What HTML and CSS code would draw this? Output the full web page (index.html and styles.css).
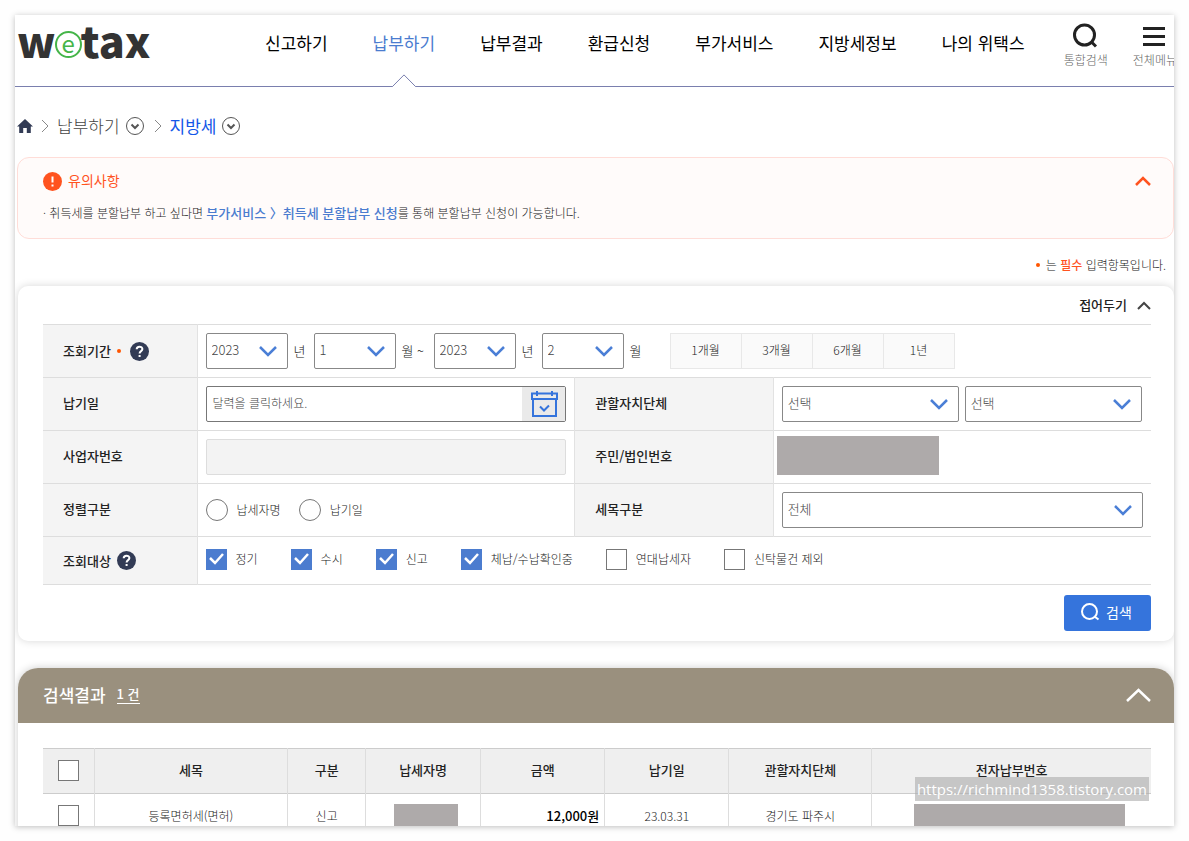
FILE: index.html
```html
<!DOCTYPE html>
<html lang="ko">
<head>
<meta charset="utf-8">
<meta name="viewport" content="width=device-width, initial-scale=1">
<title>위택스 - 지방세 납부하기</title>
<link rel="stylesheet" href="styles.css">
</head>
<body>
<div class="frame">
  <header class="header">
    <a class="logo" href="#" aria-label="wetax"><span>w</span><span class="logo-e">e</span><span>tax</span></a>
    <nav class="nav">
      <a href="#">신고하기</a>
      <a href="#" class="active">납부하기<svg class="nav-caret" width="24" height="13" viewBox="0 0 24 13"><path d="M0 13 12 1 24 13Z" fill="#fff"/><path d="M0 12.5H.5L12 .9 23.5 12.5H24" fill="none" stroke="#7a7fae"/></svg></a>
      <a href="#">납부결과</a>
      <a href="#">환급신청</a>
      <a href="#">부가서비스</a>
      <a href="#">지방세정보</a>
      <a href="#">나의 위택스</a>
    </nav>
    <div class="tools">
      <button type="button" class="tool">
        <svg width="26" height="26" viewBox="0 0 26 26" fill="none" stroke="#222" stroke-width="3"><circle cx="11.500" cy="12" r="10"/><path d="M18 18.500 23 23.500"/></svg>
        <span>통합검색</span>
      </button>
      <button type="button" class="tool">
        <svg width="26" height="26" viewBox="0 0 26 26" stroke="#222" stroke-width="3"><path d="M1 5.500H23M1 13.500H23M1 21.500H23"/></svg>
        <span>전체메뉴</span>
      </button>
    </div>
  </header>

  <nav class="crumbs" aria-label="현재 위치">
    <a href="#" aria-label="홈"><svg width="16" height="14" viewBox="0 0 16 14"><path d="M8 0 16 7.400H13.800V14H9.800V9H6.200V14H2.200V7.400H0Z" fill="#323b55"/></svg></a>
    <svg width="8" height="14" viewBox="0 0 8 14" fill="none" stroke="#888"><path d="M1 1 7 7 1 13"/></svg>
    <a href="#">납부하기</a>
    <button type="button" class="round" aria-label="납부하기 메뉴"><svg width="18" height="18" viewBox="0 0 18 18" fill="none" stroke="#555"><circle cx="9" cy="9" r="8.500"/><path d="M5.500 7.500 9 11 12.500 7.500" stroke-width="2"/></svg></button>
    <svg width="8" height="14" viewBox="0 0 8 14" fill="none" stroke="#888"><path d="M1 1 7 7 1 13"/></svg>
    <a href="#" class="current">지방세</a>
    <button type="button" class="round" aria-label="지방세 메뉴"><svg width="18" height="18" viewBox="0 0 18 18" fill="none" stroke="#555"><circle cx="9" cy="9" r="8.500"/><path d="M5.500 7.500 9 11 12.500 7.500" stroke-width="2"/></svg></button>
  </nav>

  <section class="notice">
    <div class="notice-head">
      <svg width="19" height="19" viewBox="0 0 19 19"><circle cx="9.500" cy="9.500" r="9.500" fill="#ff531f"/><path d="M9.500 4.500V10.500M9.500 12.500V14.500" stroke="#fff" stroke-width="2"/></svg>
      <h2>유의사항</h2>
      <button type="button" aria-label="유의사항 접기"><svg width="16" height="10" viewBox="0 0 16 10" fill="none" stroke="#ff531f" stroke-width="2.500"><path d="M1 9 8 2 15 9"/></svg></button>
    </div>
    <p>· 취득세를 분할납부 하고 싶다면 <a href="#">부가서비스 〉취득세 분할납부 신청</a>를 통해 분할납부 신청이 가능합니다.</p>
  </section>

  <p class="required"><i class="dot"></i><span>는 <b>필수</b> 입력항목입니다.</span></p>

  <form class="card">
    <div class="fold">
      <button type="button">접어두기 <svg width="14" height="9" viewBox="0 0 14 9" fill="none" stroke="#444" stroke-width="2"><path d="M1 8 7 2 13 8"/></svg></button>
    </div>
    <table class="form">
      <colgroup><col class="c1"><col class="c2"><col class="c3"><col class="c4"></colgroup>
      <tbody>
      <tr>
        <th scope="row"><div class="label">조회기간<i class="dot"></i><svg class="help wide" width="19" height="19" viewBox="0 0 19 19"><circle cx="9.500" cy="9.500" r="9.500" fill="#323b55"/><path d="M6.700 7.300C6.700 3.800 12.400 3.800 12.400 7.100C12.400 9.200 9.600 9 9.600 11.500M9.600 13V15" fill="none" stroke="#fff" stroke-width="2"/></svg></div></th>
        <td colspan="3">
          <div class="line">
            <select class="short" aria-label="시작 연도"><option>2023</option></select><span class="unit">년</span>
            <select class="short" aria-label="시작 월"><option>1</option></select><span class="unit long">월 ~</span>
            <select class="short" aria-label="종료 연도"><option>2023</option></select><span class="unit">년</span>
            <select class="short" aria-label="종료 월"><option>2</option></select><span class="unit">월</span>
            <div class="segments"><button type="button">1개월</button><button type="button">3개월</button><button type="button">6개월</button><button type="button">1년</button></div>
          </div>
        </td>
      </tr>
      <tr>
        <th scope="row"><label class="label" for="due">납기일</label></th>
        <td>
          <div class="date"><input id="due" type="text" placeholder="달력을 클릭하세요."><button type="button" aria-label="달력"><svg width="28" height="28" viewBox="0 0 28 28" fill="none" stroke="#3574dc" stroke-width="2"><path d="M3 9V26H26V9M2 3.500H27V9H2ZM7 1V6M22 1V6"/><path d="M10 16.500 14 20.500 19 15.500"/></svg></button></div>
        </td>
        <th scope="row"><span class="label">관할자치단체</span></th>
        <td><div class="pair"><select aria-label="관할 시도"><option>선택</option></select><select aria-label="관할 시군구"><option>선택</option></select></div></td>
      </tr>
      <tr>
        <th scope="row"><label class="label" for="biz">사업자번호</label></th>
        <td><input id="biz" class="text" type="text" disabled></td>
        <th scope="row"><span class="label">주민/법인번호</span></th>
        <td class="masked"><span class="mask id"></span></td>
      </tr>
      <tr>
        <th scope="row"><span class="label">정렬구분</span></th>
        <td>
          <div class="radios">
            <label><input type="radio" name="sort">납세자명</label>
            <label><input type="radio" name="sort">납기일</label>
          </div>
        </td>
        <th scope="row"><label class="label" for="kind">세목구분</label></th>
        <td><select id="kind" class="full"><option>전체</option></select></td>
      </tr>
      <tr class="targets">
        <th scope="row"><div class="label">조회대상<svg class="help" width="19" height="19" viewBox="0 0 19 19"><circle cx="9.500" cy="9.500" r="9.500" fill="#323b55"/><path d="M6.700 7.300C6.700 3.800 12.400 3.800 12.400 7.100C12.400 9.200 9.600 9 9.600 11.500M9.600 13V15" fill="none" stroke="#fff" stroke-width="2"/></svg></div></th>
        <td colspan="3">
          <div class="checks">
            <label><input type="checkbox" checked>정기</label>
            <label><input type="checkbox" checked>수시</label>
            <label><input type="checkbox" checked>신고</label>
            <label><input type="checkbox" checked>체납/수납확인중</label>
            <label><input type="checkbox">연대납세자</label>
            <label><input type="checkbox">신탁물건 제외</label>
          </div>
        </td>
      </tr>
      </tbody>
    </table>
    <div class="actions">
      <button type="submit" class="search"><svg width="19" height="18" viewBox="0 0 19 18" fill="none" stroke="#fff" stroke-width="2"><circle cx="8.500" cy="8.500" r="7.500"/><path d="M13.500 13.500 17.500 16.500"/></svg>검색</button>
    </div>
  </form>

  <section class="results">
    <div class="results-head">
      <h2>검색결과</h2><span class="count">1 건</span>
      <button type="button" aria-label="검색결과 접기"><svg width="25" height="14" viewBox="0 0 25 14" fill="none" stroke="#fff" stroke-width="2.500"><path d="M1 13 12.500 2 24 13"/></svg></button>
    </div>
    <div class="results-body">
      <table class="list">
        <colgroup><col class="l1"><col class="l2"><col class="l3"><col class="l4"><col class="l5"><col class="l5"><col class="l7"><col class="l8"></colgroup>
        <thead>
          <tr><th><input type="checkbox" aria-label="전체 선택"></th><th scope="col">세목</th><th scope="col">구분</th><th scope="col">납세자명</th><th scope="col">금액</th><th scope="col">납기일</th><th scope="col">관할자치단체</th><th scope="col">전자납부번호</th></tr>
        </thead>
        <tbody>
          <tr><td><input type="checkbox" aria-label="등록면허세 선택"></td><td>등록면허세(면허)</td><td>신고</td><td><span class="mask name"></span></td><td class="amount">12,000원</td><td>23.03.31</td><td>경기도 파주시</td><td><span class="mask number"></span></td></tr>
        </tbody>
      </table>
    </div>
  </section>
  <span class="watermark">https://richmind1358.tistory.com</span>
</div>
</body>
</html>
```
FILE: styles.css
```css
* { box-sizing: border-box; }
body {
  margin: 0;
  padding: 15px;
  height: 100vh;
  background: #fefefe;
  font-family: "Noto Sans CJK KR", "Noto Sans", sans-serif;
  font-size: 13px;
  line-height: 20px;
  font-weight: 300;
  color: #222;
}
a { color: inherit; text-decoration: none; }
h2, p { margin: 0; }
svg { display: block; flex: none; }
button, input, select { font: inherit; color: inherit; margin: 0; }
button { padding: 0; border: 0; background: none; cursor: pointer; }

.frame {
  position: relative;
  height: 100%;
  overflow: hidden;
  background: #fff;
  box-shadow: 0 1px 6px rgba(0, 0, 0, .25);
}

.header {
  display: flex;
  height: 72px;
  padding-left: 2px;
  border-bottom: 1px solid #7a7fae;
}
.logo {
  display: flex;
  align-items: flex-start;
  width: 132px;
  height: 60px;
  font-size: 43px;
  line-height: 48px;
  font-weight: 900;
  color: #333;
}
.logo-e {
  flex: none;
  width: 27px;
  height: 27px;
  margin: 16px -1px 0;
  border: 2px solid #45b549;
  border-radius: 50%;
  color: #45b549;
  font-size: 24px;
  line-height: 19px;
  font-weight: 400;
  text-align: center;
}
.nav {
  display: flex;
  gap: 45px;
  margin-left: 116px;
  font-size: 17px;
  line-height: 56px;
  font-weight: 400;
  color: #000;
  white-space: nowrap;
}
.nav a { position: relative; height: 72px; }
.nav .active { color: #4b7ccf; }
.nav-caret { position: absolute; left: 50%; bottom: 0; margin-left: -12px; }
.tools {
  display: flex;
  gap: 25px;
  margin: 8px -3px 0 auto;
  font-size: 12px;
  color: #666;
  white-space: nowrap;
}
.tool { display: flex; flex-direction: column; align-items: center; gap: 1px; height: 48px; }

.crumbs {
  display: flex;
  align-items: center;
  gap: 8px;
  height: 24px;
  margin: 27px 0 19px 2px;
  font-size: 17px;
  line-height: 24px;
  color: #444;
}
.crumbs .current { color: #1457e8; font-weight: 400; }
.round { margin: 0 2px 0 -2px; }

.notice {
  height: 82px;
  margin-left: 2px;
  padding: 12px 22px 0 25px;
  border: 1px solid #ffddd8;
  border-radius: 12px;
  background: #fffbfa;
}
.notice-head { display: flex; align-items: center; gap: 6px; height: 22px; color: #ff531f; }
.notice-head h2 { font-size: 14px; line-height: 18px; padding-bottom: 2px; font-weight: 400; }
.notice-head button { margin-left: auto; }
.notice p { margin-top: 11px; font-size: 12px; }
.notice p a { color: #4b7ccf; font-size: 13px; font-weight: 500; }

.required {
  display: flex;
  align-items: center;
  justify-content: flex-end;
  gap: 6px;
  margin: 16px 8px 11px;
  font-size: 12px;
}
.required b { color: #ff531f; font-weight: 500; }
.dot { width: 4px; height: 4px; border-radius: 50%; background: #ff5500; }

.card {
  margin-left: 3px;
  padding: 0 23px 10px 25px;
  border-radius: 10px;
  background: #fff;
  box-shadow: 0 0 8px rgba(0, 0, 0, .16);
}
.fold { display: flex; justify-content: flex-end; height: 38px; }
.fold button { display: flex; align-items: center; gap: 10px; font-weight: 500; }

.form, .list { width: 100%; border-collapse: collapse; table-layout: fixed; }
.c1 { width: 13.9%; }
.c2 { width: 34.1%; }
.c3 { width: 17.9%; }
.c4 { width: 34.1%; }
.form tr { height: 53px; border-top: 1px solid #ddd; }
.form .targets { height: 48px; border-bottom: 1px solid #ddd; }
.form th {
  padding: 0 20px 2px;
  border-right: 1px solid #e2e2e2;
  background: #f4f4f4;
  font-weight: 500;
  text-align: left;
  color: #222;
}
.form td + th { border-left: 1px solid #e2e2e2; }
.form td { padding: 0 8px; }
.form .masked { padding: 5px 3px 0; vertical-align: top; }
.form .targets td { padding-bottom: 3px; }
.form .targets th, .form tr:first-child th { padding-bottom: 0; }
.label { display: flex; align-items: center; gap: 6px; }
.help.wide { margin-left: 3px; }
.line, .pair, .radios, .checks { display: flex; align-items: center; }
select {
  height: 36px;
  padding: 0 34px 2px 5px;
  border: 1px solid #888;
  border-radius: 2px;
  appearance: none;
  background: #fff url("data:image/svg+xml,%3Csvg xmlns='http://www.w3.org/2000/svg' width='18' height='11' fill='none' stroke='%234b7fd6' stroke-width='2.500'%3E%3Cpath d='M1 1 9 9 17 1'/%3E%3C/svg%3E") no-repeat right 10px center;
  color: #444;
}
.short { width: 82px; padding-right: 26px; }
.unit { width: 26px; padding-left: 6px; }
.unit.long { width: 38px; }
.segments { display: flex; margin-left: 20px; border: 1px solid #e8e8e8; }
.segments button { width: 70px; height: 34px; padding-bottom: 2px; background: #fafafa; font-size: 12px; }
.segments button + button { width: 71px; border-left: 1px solid #e8e8e8; }
.pair { gap: 6px; }
.pair select { flex: 1; max-width: 177px; }
.full { width: 100%; }
.date { display: flex; height: 36px; border: 1px solid #777; border-radius: 2px; }
.date input { flex: 1; min-width: 0; padding: 0 6px 2px; border: 0; background: none; font-size: 12px; }
.date input::placeholder { color: #444; }
.date button { display: grid; place-items: center; width: 43px; background: #eaeaea; }
.text { display: block; width: 100%; height: 36px; border: 1px solid #ddd; border-radius: 2px; background: #f3f3f3; }
.mask { display: block; background: #aeaaaa; }
.id { width: 162px; height: 39px; }
.radios { gap: 18px; font-size: 12px; }
.checks { gap: 33px; font-size: 12px; }
.radios label, .checks label { display: flex; align-items: center; gap: 9px; }
input[type="radio"] {
  width: 22px;
  height: 22px;
  border: 1px solid #777;
  border-radius: 50%;
  appearance: none;
  background: #fff;
}
input[type="checkbox"] {
  display: block;
  width: 21px;
  height: 21px;
  border: 1px solid #777;
  appearance: none;
  background: #fff;
}
input[type="checkbox"]:checked {
  border-color: #4b7ccf;
  background: #4b7ccf url("data:image/svg+xml,%3Csvg xmlns='http://www.w3.org/2000/svg' width='15' height='12' fill='none' stroke='white' stroke-width='2.500'%3E%3Cpath d='M1 5 6 10 14 1'/%3E%3C/svg%3E") no-repeat center;
}
.actions { display: flex; justify-content: flex-end; padding-top: 10px; }
.search {
  display: flex;
  align-items: center;
  justify-content: center;
  gap: 6px;
  width: 87px;
  height: 36px;
  padding: 0 2px 2px 0;
  border-radius: 3px;
  background: #3574dc;
  color: #fff;
  font-size: 14px;
  font-weight: 400;
}

.results {
  margin: 27px 0 0 3px;
  border-radius: 20px 20px 0 0;
  box-shadow: 0 0 8px rgba(0, 0, 0, .2);
}
.results-head {
  display: flex;
  align-items: center;
  height: 55px;
  padding: 0 23px 2px 25px;
  border-radius: 20px 20px 0 0;
  background: #9a907e;
  color: #fff;
}
.results-head h2 { font-size: 17px; font-weight: 500; }
.count { margin-left: 11px; border-bottom: 1px solid #fff; font-size: 13px; line-height: 18px; font-weight: 500; }
.results-head button { margin-left: auto; }
.results-body { padding: 25px 23px 30px 25px; }
.l1 { width: 51px; }
.l2 { width: 17.5%; }
.l3 { width: 7%; }
.l4 { width: 10.4%; }
.l5 { width: 11.2%; }
.l7 { width: 12.9%; }
.list tr { height: 45px; border-top: 1px solid #ccc; }
.list th, .list td { padding: 0 5px 2px; text-align: center; }
.list th + th, .list td + td { border-left: 1px solid #ddd; }
.list th { background: #efefef; font-weight: 500; color: #222; }
.list tbody tr { height: 46px; border-bottom: 1px solid #ccc; }
.list td { font-size: 12px; }
.list input, .list .mask { margin: 0 auto; }
.list .amount { text-align: right; font-size: 13px; font-weight: 500; color: #000; }
.name { width: 64px; height: 24px; }
.number { width: 211px; height: 24px; }
.list .name { margin-left: 23px; }
.list .number { margin-left: 37px; }

.watermark {
  position: absolute;
  right: 25px;
  bottom: 25px;
  padding: 0 2px;
  background: rgba(170, 170, 170, .6);
  color: #fff;
  font-family: "Open Sans", sans-serif;
  font-size: 15px;
  line-height: 24px;
  font-weight: 400;
}
```
